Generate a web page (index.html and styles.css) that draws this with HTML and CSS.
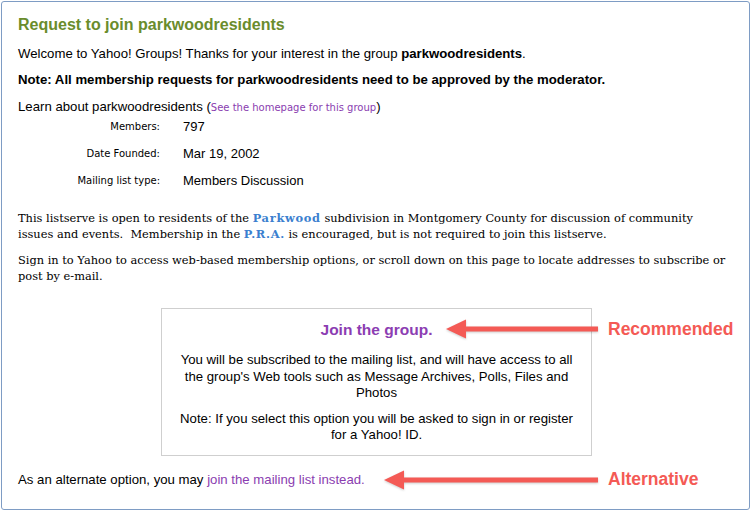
FILE: index.html
```html
<!DOCTYPE html>
<html>
<head>
<meta charset="utf-8">
<link rel="stylesheet" href="styles.css">
</head>
<body>
<div class="panel">
  <h1 class="title">Request to join parkwoodresidents</h1>
  <p class="line welcome">Welcome to Yahoo! Groups! Thanks for your interest in the group <b>parkwoodresidents</b>.</p>
  <p class="line note"><b>Note: All membership requests for parkwoodresidents need to be approved by the moderator.</b></p>
  <p class="line learn">Learn about parkwoodresidents (<a class="small-link" href="#">See the homepage for this group</a>)</p>
  <div class="info">
    <div class="label">Members:</div><div class="value">797</div>
    <div class="label">Date Founded:</div><div class="value">Mar 19, 2002</div>
    <div class="label">Mailing list type:</div><div class="value">Members Discussion</div>
  </div>
  <p class="serif first">This listserve is open to residents of the <b class="blue">Parkwood</b> subdivision in Montgomery County for discussion of community issues and events.&nbsp; Membership in the <b class="blue">P.R.A.</b> is encouraged, but is not required to join this listserve.</p>
  <p class="serif">Sign in to Yahoo to access web-based membership options, or scroll down on this page to locate addresses to subscribe or post by e-mail.</p>
  <div class="join-row">
    <div class="join-box">
      <div class="join-title">Join the group.</div>
      <p class="box-text">You will be subscribed to the mailing list, and will have access to all the group's Web tools such as Message Archives, Polls, Files and Photos</p>
      <p class="box-text">Note: If you select this option you will be asked to sign in or register for a Yahoo! ID.</p>
    </div>
    <div class="callout callout-rec">
      <svg class="arrow" width="152" height="22" viewBox="0 0 152 22">
        <rect x="18" y="8.5" width="134" height="5" fill="#f45a55"/>
        <polygon points="0,11 20,1.5 20,20.5" fill="#f45a55"/>
      </svg>
      <span class="callout-text">Recommended</span>
    </div>
  </div>
  <div class="alt-row">
    <p class="line alt">As an alternate option, you may <a class="link" href="#">join the mailing list instead.</a></p>
    <div class="callout callout-alt">
      <svg class="arrow" width="214" height="22" viewBox="0 0 214 22">
        <rect x="18" y="8.5" width="196" height="5" fill="#f45a55"/>
        <polygon points="0,11 20,1.5 20,20.5" fill="#f45a55"/>
      </svg>
      <span class="callout-text">Alternative</span>
    </div>
  </div>
</div>
</body>
</html>
```

FILE: styles.css
```css
html, body {
  margin: 0;
  padding: 0;
  background: #fff;
}
body {
  font-family: "Liberation Sans", Arial, sans-serif;
  font-size: 13.2px;
  color: #000;
}
.panel {
  box-sizing: border-box;
  margin: 1px 0 0 1px;
  width: 749px;
  height: 509px;
  border: 1px solid #7e9cc4;
  border-radius: 3px;
  padding: 14px 16px 0 16px;
}
.title {
  margin: 0;
  font-size: 16px;
  line-height: 18px;
  font-weight: bold;
  color: #6a8c2c;
}
.line {
  margin: 0;
  line-height: 16px;
}
.welcome { margin-top: 12px; }
.note { margin-top: 10px; }
.learn { margin-top: 11px; }
.small-link {
  font-family: "DejaVu Sans", Verdana, sans-serif;
  font-size: 10px;
  color: #8a3db0;
  text-decoration: none;
}
.info {
  display: grid;
  grid-template-columns: 142px auto;
  column-gap: 23px;
  grid-auto-rows: 27px;
  align-items: center;
  margin-top: -3px;
}
.label {
  text-align: right;
  font-family: "DejaVu Sans", Verdana, sans-serif;
  font-size: 10px;
}
.value {
  font-size: 13px;
}
.serif {
  font-family: "DejaVu Serif", Georgia, serif;
  font-size: 11.4px;
  line-height: 16px;
  margin: 10px 0 0 0;
  max-width: 710px;
}
.serif.first { margin-top: 16px; }
.blue {
  color: #3b7fcf;
  letter-spacing: 0.7px;
}
.join-row {
  position: relative;
  margin-top: 24px;
  display: flex;
  justify-content: center;
}
.join-box {
  box-sizing: border-box;
  width: 431px;
  border: 1px solid #cfcfcf;
  padding: 10px 14px 11px 14px;
  text-align: center;
  margin-left: 2px;
}
.join-title {
  font-size: 15.5px;
  font-weight: bold;
  line-height: 22px;
  color: #8c3db2;
}
.box-text {
  margin: 11px 0 0 0;
  line-height: 16.5px;
}
.box-text + .box-text { margin-top: 9px; }
.callout {
  position: absolute;
  display: flex;
  align-items: center;
}
.callout-rec {
  left: 428px;
  top: 10px;
}
.callout-text {
  font-size: 17.5px;
  font-weight: bold;
  color: #f45a55;
  margin-left: 10px;
}
.arrow {
  display: block;
  filter: drop-shadow(0 1px 1px rgba(0,0,0,0.2));
}
.alt-row {
  position: relative;
  margin-top: 16px;
}
.link {
  color: #8a3db0;
  text-decoration: none;
}
.callout-alt {
  left: 366px;
  top: -3px;
}
```
